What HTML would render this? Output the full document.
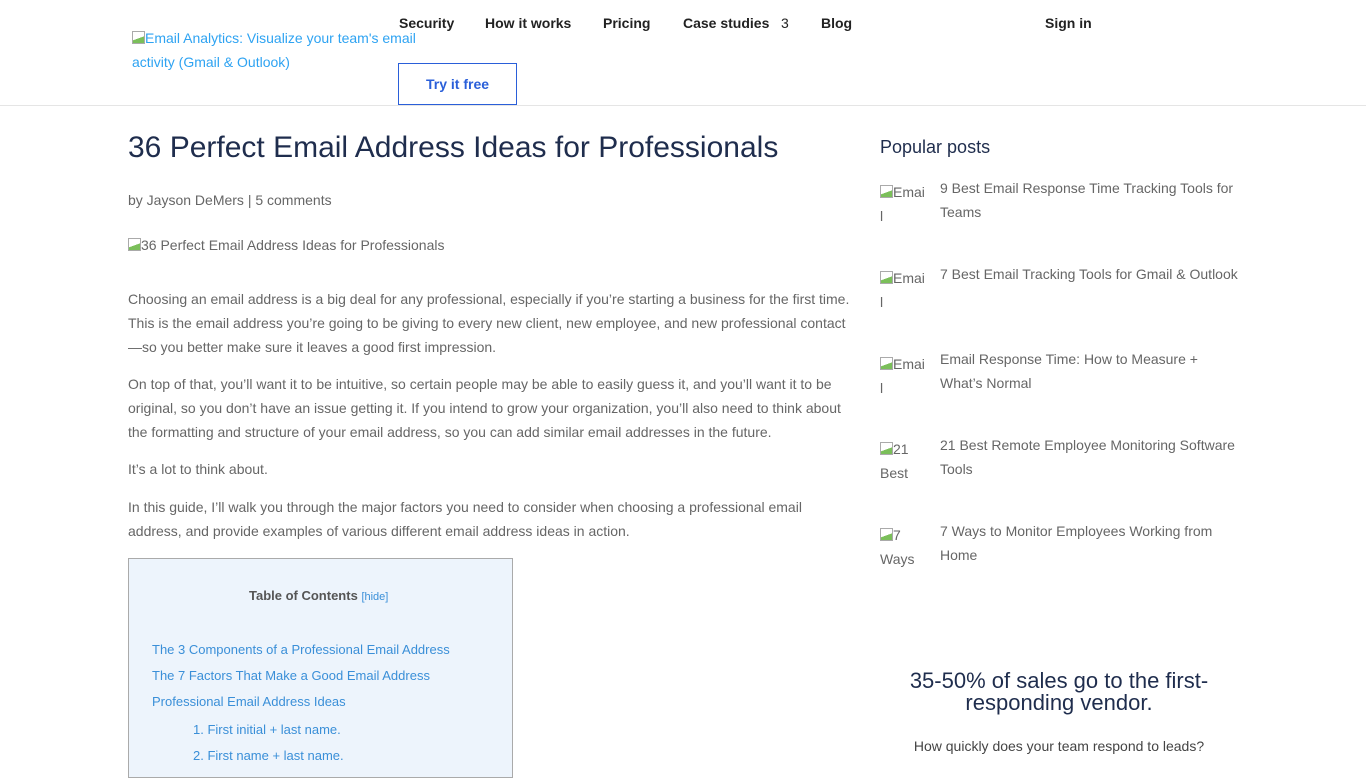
<!DOCTYPE html>
<html><head><meta charset="utf-8"><style>
*{margin:0;padding:0;box-sizing:border-box}
body{width:1366px;height:768px;overflow:hidden;background:#fff;font-family:"Liberation Sans",Arial,sans-serif;position:relative;color:#666}
.a{position:absolute;white-space:nowrap}
.nav{font-size:14px;font-weight:bold;color:#222;top:15px}
.logo{left:132px;top:26px;font-size:14px;color:#2ea3f2;line-height:24px;white-space:normal;width:300px}
.btn{left:398px;top:63px;width:119px;height:42px;border:1px solid #2a5fd9;color:#2a5fd9;font-size:14px;font-weight:bold;text-align:center;line-height:40px}
.hr{left:0;top:105px;width:1366px;height:1px;background:#e5e5e5}
h1{position:absolute;left:128px;top:131px;font-size:30px;font-weight:normal;color:#1f2d4d;white-space:nowrap}
p{position:absolute;left:128px;width:725px;font-size:14px;line-height:24px;color:#666}
.toc{position:absolute;left:128px;top:558px;width:385px;height:220px;background:#edf4fc;border:1px solid #aaa}
.toc div{position:absolute;font-size:13px;color:#3a8fd8;white-space:nowrap}
.side{position:absolute;left:940px;font-size:14px;line-height:24px;color:#666;width:298px}
.im{position:absolute;left:880px;font-size:14px;line-height:24px;color:#666;width:50px}
.bi{display:inline-block;width:13px;height:13px;border:1px solid #aaa;background:linear-gradient(160deg,#fff 55%,#7bbf5a 56%);vertical-align:-1px}
</style></head><body>
<div class="a logo"><span class="bi"></span>Email Analytics: Visualize your team's email activity (Gmail &amp; Outlook)</div>
<div class="a nav" style="left:399px">Security</div>
<div class="a nav" style="left:485px">How it works</div>
<div class="a nav" style="left:603px">Pricing</div>
<div class="a nav" style="left:683px">Case studies &nbsp; <span style="font-weight:normal">3</span></div>
<div class="a nav" style="left:821px">Blog</div>
<div class="a nav" style="left:1045px">Sign in</div>
<div class="a btn">Try it free</div>
<div class="a hr"></div>
<h1>36 Perfect Email Address Ideas for Professionals</h1>
<div class="a" style="left:128px;top:192px;font-size:14px">by Jayson DeMers | 5 comments</div>
<div class="a" style="left:128px;top:237px;font-size:14px"><span class="bi"></span>36 Perfect Email Address Ideas for Professionals</div>
<p style="top:287px">Choosing an email address is a big deal for any professional, especially if you’re starting a business for the first time. This is the email address you’re going to be giving to every new client, new employee, and new professional contact—so you better make sure it leaves a good first impression.</p>
<p style="top:372px">On top of that, you’ll want it to be intuitive, so certain people may be able to easily guess it, and you’ll want it to be original, so you don’t have an issue getting it. If you intend to grow your organization, you’ll also need to think about the formatting and structure of your email address, so you can add similar email addresses in the future.</p>
<p style="top:457px">It’s a lot to think about.</p>
<p style="top:495px">In this guide, I’ll walk you through the major factors you need to consider when choosing a professional email address, and provide examples of various different email address ideas in action.</p>
<div class="toc">
<div style="left:120px;top:29px;color:#555;font-weight:bold">Table of Contents <span style="font-weight:normal;font-size:11px;color:#3a8fd8">[hide]</span></div>
<div style="left:23px;top:83px">The 3 Components of a Professional Email Address</div>
<div style="left:23px;top:109px">The 7 Factors That Make a Good Email Address</div>
<div style="left:23px;top:135px">Professional Email Address Ideas</div>
<div style="left:64px;top:163px">1. First initial + last name.</div>
<div style="left:64px;top:189px">2. First name + last name.</div>
</div>
<div class="a" style="left:880px;top:137px;font-size:18px;color:#1f2d4d">Popular posts</div>
<div class="im" style="top:180px"><span class="bi"></span>Emai l</div><div class="side" style="top:176px">9 Best Email Response Time Tracking Tools for Teams</div>
<div class="im" style="top:266px"><span class="bi"></span>Emai l</div><div class="side" style="top:262px">7 Best Email Tracking Tools for Gmail &amp; Outlook</div>
<div class="im" style="top:352px"><span class="bi"></span>Emai l</div><div class="side" style="top:347px">Email Response Time: How to Measure + What’s Normal</div>
<div class="im" style="top:437px"><span class="bi"></span>21 Best</div><div class="side" style="top:433px">21 Best Remote Employee Monitoring Software Tools</div>
<div class="im" style="top:523px"><span class="bi"></span>7 Ways</div><div class="side" style="top:519px">7 Ways to Monitor Employees Working from Home</div>
<div class="a" style="left:880px;top:670px;width:358px;text-align:center;font-size:22px;line-height:22px;color:#1f2d4d;white-space:normal">35-50% of sales go to the first-responding vendor.</div>
<div class="a" style="left:880px;top:738px;width:358px;text-align:center;font-size:14px;color:#444">How quickly does your team respond to leads?</div>
</body></html>
